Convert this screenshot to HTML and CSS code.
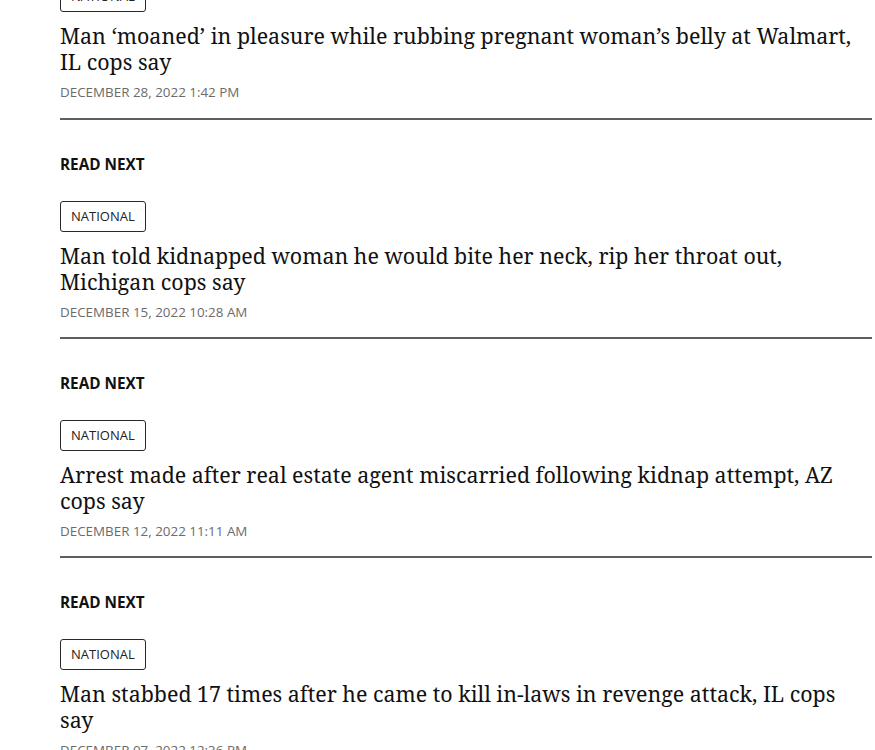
FILE: index.html
```html
<!DOCTYPE html>
<html lang="en">
<head>
<meta charset="utf-8">
<title>Read Next</title>
<link rel="stylesheet" href="styles.css">
</head>
<body>
<main class="list">
  <article class="story first">
    <span class="tag">NATIONAL</span>
    <h3 class="headline">Man ‘moaned’ in pleasure while rubbing pregnant woman’s belly at Walmart, IL cops say</h3>
    <p class="date">DECEMBER 28, 2022 1:42 PM</p>
  </article>
  <article class="story">
    <h2 class="label">READ NEXT</h2>
    <span class="tag">NATIONAL</span>
    <h3 class="headline">Man told kidnapped woman he would bite her neck, rip her throat out, Michigan cops say</h3>
    <p class="date">DECEMBER 15, 2022 10:28 AM</p>
  </article>
  <article class="story">
    <h2 class="label">READ NEXT</h2>
    <span class="tag">NATIONAL</span>
    <h3 class="headline">Arrest made after real estate agent miscarried following kidnap attempt, AZ cops say</h3>
    <p class="date">DECEMBER 12, 2022 11:11 AM</p>
  </article>
  <article class="story">
    <h2 class="label">READ NEXT</h2>
    <span class="tag">NATIONAL</span>
    <h3 class="headline">Man stabbed 17 times after he came to kill in-laws in revenge attack, IL cops say</h3>
    <p class="date">DECEMBER 07, 2022 12:36 PM</p>
  </article>
</main>
</body>
</html>
```
FILE: styles.css
```css
html, body {
  margin: 0;
  padding: 0;
  background: #fff;
}
body {
  font-family: "Open Sans", "Noto Sans", sans-serif;
  color: #111;
  overflow: hidden;
}
.list {
  width: 812px;
  margin-left: 60px;
  margin-top: -19px;
  display: flex;
  flex-direction: column;
}
.story {
  display: flex;
  flex-direction: column;
  align-items: flex-start;
  border-bottom: 2px solid #5e5e5e;
  padding-bottom: 15px;
}
.story.first {
  padding-bottom: 16px;
}
.label {
  margin: 34px 0 27px;
  font-size: 15.3px;
  line-height: 20px;
  font-weight: 700;
  color: #111;
}
.tag {
  display: inline-block;
  box-sizing: border-box;
  height: 31px;
  padding: 0 10px;
  border: 1px solid #2a2a2a;
  border-radius: 3px;
  font-size: 13px;
  line-height: 29px;
  color: #222;
}
.headline {
  margin: 11px 0 0;
  font-family: "Noto Serif", "DejaVu Serif", "Liberation Serif", serif;
  font-weight: 400;
  font-size: 21.4px;
  line-height: 26px;
  color: #111;
}
.date {
  margin: 7px 0 0;
  font-size: 13.4px;
  line-height: 20px;
  color: #6b6b6b;
}
```
